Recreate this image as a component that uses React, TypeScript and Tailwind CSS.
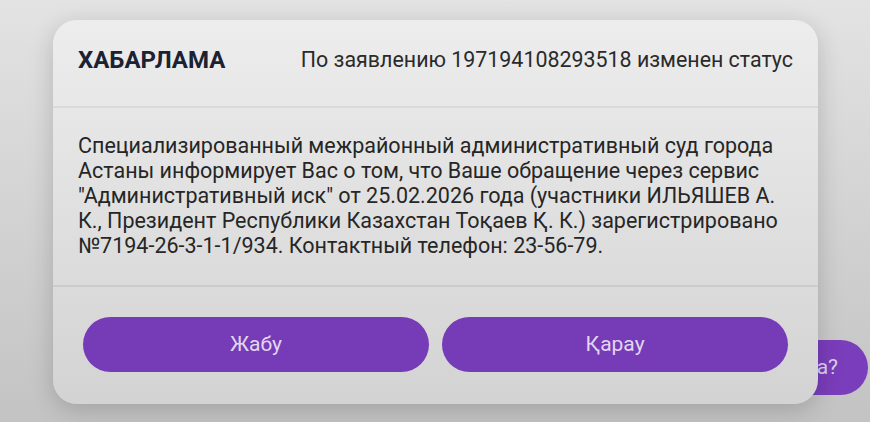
import React from "react";

const App: React.FC = () => {
  return (
    <div
      className="relative w-[870px] h-[422px] overflow-hidden bg-gradient-to-b from-[#e3e3e3] to-[#c3c3c3]"
      style={{ fontFamily: "Roboto, 'Noto Sans', sans-serif" }}
    >
      {/* pill behind the dim overlay */}
      <div className="absolute left-[640px] top-[340px] w-[228px] h-[55px] rounded-full bg-[#7a3dbb] flex items-center justify-end pr-[30px]">
        <span className="text-[21px] text-[#ddd0ec] whitespace-nowrap">Сұрақ бар ма?</span>
      </div>

      <div className="relative pt-[20px] pl-[53px]">
        <div className="w-[765px] h-[384px] rounded-[24px] bg-gradient-to-b from-[#ededed] to-[#d3d3d3] shadow-[0_6px_24px_rgba(0,0,0,0.18)] flex flex-col overflow-hidden">
          {/* Header */}
          <div className="h-[86px] flex items-center justify-between px-[25px] pb-[6px]">
            <span className="text-[24px] font-bold text-[#1b2233]">ХАБАРЛАМА</span>
            <span className="text-[21.4px] text-[#2a2a2a]">По заявлению 197194108293518 изменен статус</span>
          </div>
          <div className="h-[2px] bg-[#dadada]" />

          {/* Body */}
          <div className="px-[25px] pt-[25px] pb-[27px]">
            <p className="text-[21.5px] leading-[25px] text-[#262626] whitespace-nowrap">
              Специализированный межрайонный административный суд города
              <br />
              Астаны информирует Вас о том, что Ваше обращение через сервис
              <br />
              "Административный иск" от 25.02.2026 года (участники ИЛЬЯШЕВ А.
              <br />
              К., Президент Республики Казахстан Тоқаев Қ. К.) зарегистрировано
              <br />
              №7194-26-3-1-1/934. Контактный телефон: 23-56-79.
            </p>
          </div>
          <div className="h-[2px] bg-[#cbcbcb]" />

          {/* Buttons */}
          <div className="flex gap-[13px] px-[30px] pt-[30px]">
            <button className="flex-1 h-[55px] rounded-full bg-[#763bb7] text-[21px] text-[#e2d6f0]">Жабу</button>
            <button className="flex-1 h-[55px] rounded-full bg-[#763bb7] text-[21px] text-[#e2d6f0]">Қарау</button>
          </div>
        </div>
      </div>
    </div>
  );
};

export default App;
